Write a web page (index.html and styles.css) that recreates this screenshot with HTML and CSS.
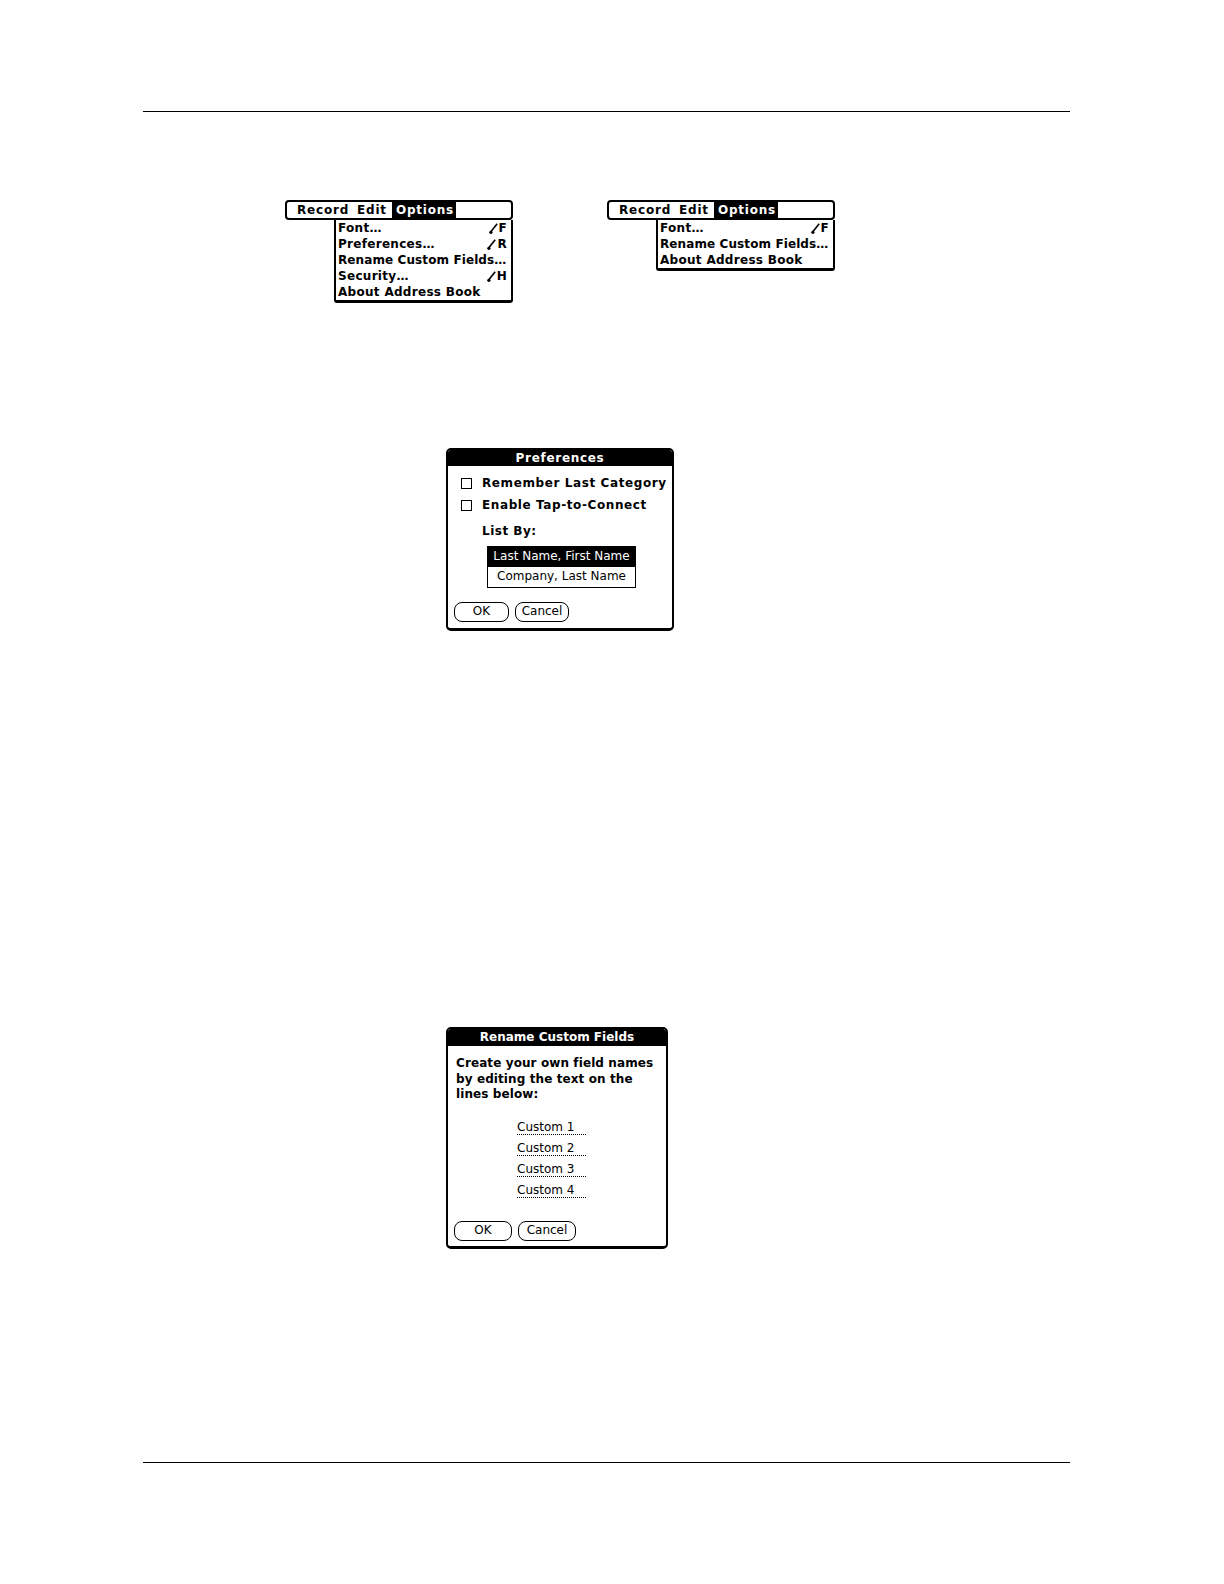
FILE: index.html
```html
<!DOCTYPE html>
<html>
<head>
<meta charset="utf-8">
<link rel="stylesheet" href="styles.css">
</head>
<body>
<div class="page">
  <hr class="rule">
  <div class="menus">
    <div class="menu">
      <div class="menubar"><span class="mt">Record</span><span class="mt">Edit</span><span class="mt active">Options</span></div>
      <div class="dropdown">
        <div class="item"><span>Font…</span><span class="sc"><svg class="stroke" viewBox="0 0 9 11" width="9" height="11"><path d="M1.2 9.6 L8.2 0.8" stroke="#000" stroke-width="1.6" fill="none"/><circle cx="1.9" cy="9.3" r="1.6" fill="#000"/></svg>F</span></div>
        <div class="item"><span>Preferences…</span><span class="sc"><svg class="stroke" viewBox="0 0 9 11" width="9" height="11"><path d="M1.2 9.6 L8.2 0.8" stroke="#000" stroke-width="1.6" fill="none"/><circle cx="1.9" cy="9.3" r="1.6" fill="#000"/></svg>R</span></div>
        <div class="item"><span class="tight">Rename Custom Fields…</span></div>
        <div class="item"><span>Security…</span><span class="sc"><svg class="stroke" viewBox="0 0 9 11" width="9" height="11"><path d="M1.2 9.6 L8.2 0.8" stroke="#000" stroke-width="1.6" fill="none"/><circle cx="1.9" cy="9.3" r="1.6" fill="#000"/></svg>H</span></div>
        <div class="item"><span>About Address Book</span></div>
      </div>
    </div>
    <div class="menu">
      <div class="menubar"><span class="mt">Record</span><span class="mt">Edit</span><span class="mt active">Options</span></div>
      <div class="dropdown">
        <div class="item"><span>Font…</span><span class="sc"><svg class="stroke" viewBox="0 0 9 11" width="9" height="11"><path d="M1.2 9.6 L8.2 0.8" stroke="#000" stroke-width="1.6" fill="none"/><circle cx="1.9" cy="9.3" r="1.6" fill="#000"/></svg>F</span></div>
        <div class="item"><span class="tight">Rename Custom Fields…</span></div>
        <div class="item"><span>About Address Book</span></div>
      </div>
    </div>
  </div>

  <div class="dialog prefs">
    <div class="title">Preferences</div>
    <div class="check-row"><span class="box"></span><span class="label">Remember Last Category</span></div>
    <div class="check-row"><span class="box"></span><span class="label">Enable Tap-to-Connect</span></div>
    <div class="listby">List By:</div>
    <div class="listbox">
      <div class="opt selected">Last Name, First Name</div>
      <div class="opt">Company, Last Name</div>
    </div>
    <div class="buttons">
      <span class="btn ok">OK</span>
      <span class="btn cancel">Cancel</span>
    </div>
  </div>

  <div class="dialog rename">
    <div class="title">Rename Custom Fields</div>
    <p class="desc">Create your own field names<br>by editing the text on the<br>lines below:</p>
    <div class="fields">
      <div class="field"><span>Custom 1</span></div>
      <div class="field"><span>Custom 2</span></div>
      <div class="field"><span>Custom 3</span></div>
      <div class="field"><span>Custom 4</span></div>
    </div>
    <div class="buttons">
      <span class="btn ok2">OK</span>
      <span class="btn cancel2">Cancel</span>
    </div>
  </div>

  <hr class="rule rule-bottom">
</div>
</body>
</html>
```
FILE: styles.css
```css
* { box-sizing: border-box; }
html, body { overflow: hidden; }
body {
  margin: 0;
  background: #fff;
  color: #000;
  font-family: "DejaVu Sans", "Liberation Sans", sans-serif;
}
.page {
  padding-top: 111px;
}
.rule {
  display: block;
  margin: 0 0 0 143px;
  width: 927px;
  height: 0;
  border: 0;
  border-top: 1.5px solid #000;
}
.rule-bottom { margin-top: 213px; }

/* Menus */
.menus {
  display: flex;
  align-items: flex-start;
  gap: 94px;
  margin: 88px 0 0 285px;
}
.menu { width: 228px; }
.menubar {
  height: 20px;
  border: 2px solid #000;
  border-radius: 4px;
  display: flex;
  align-items: center;
  padding-left: 7px;
  font-weight: bold;
  font-size: 12px;
  letter-spacing: 0.8px;
}
.mt {
  padding: 0 3px;
  line-height: 16px;
  margin-right: 2px;
}
.mt.active { background: #000; color: #fff; padding: 0 2px 0 4px; }
.dropdown {
  margin-left: 49px;
  border: 2px solid #000;
  border-top: 0;
  border-bottom-width: 3px;
  border-radius: 0 0 3px 3px;
  font-weight: bold;
  font-size: 12px;
  letter-spacing: 0.3px;
}
.item {
  display: flex;
  justify-content: space-between;
  align-items: center;
  height: 16px;
  line-height: 16px;
  padding: 0 4px 0 2px;
  white-space: nowrap;
}
.tight { letter-spacing: 0.1px; }
.sc { display: flex; align-items: center; gap: 1px; }
.stroke { display: block; }

/* Dialogs */
.dialog {
  border: 2px solid #000;
  border-bottom-width: 3px;
  border-radius: 5px;
  overflow: hidden;
  font-size: 12px;
}
.title {
  background: #000;
  color: #fff;
  text-align: center;
  font-weight: bold;
  height: 16px;
  line-height: 16px;
}
.prefs {
  width: 228px;
  margin: 145px 0 0 446px;
  padding-bottom: 6px;
}
.prefs .title { margin-bottom: 6px; letter-spacing: 0.7px; }
.check-row {
  display: flex;
  align-items: center;
  height: 22px;
  padding-left: 13px;
  font-weight: bold;
  white-space: nowrap;
  letter-spacing: 0.6px;
}
.box {
  width: 11px;
  height: 11px;
  border: 1.5px solid #000;
  margin-right: 10px;
}
.listby {
  margin: 7px 0 0 34px;
  height: 16px;
  line-height: 16px;
  font-weight: bold;
  letter-spacing: 0.5px;
}
.listbox {
  margin: 7px 0 0 39px;
  width: 149px;
  border: 1px solid #000;
}
.opt {
  height: 20px;
  line-height: 19px;
  text-align: center;
  white-space: nowrap;
}
.opt.selected { background: #000; color: #fff; }
.buttons {
  display: flex;
  gap: 6px;
  margin: 14px 0 0 6px;
}
.btn {
  height: 20px;
  border: 1.5px solid #000;
  border-radius: 8px;
  text-align: center;
  line-height: 17px;
}
.ok { width: 55px; }
.cancel { width: 54px; }

.rename {
  width: 222px;
  margin: 396px 0 0 446px;
  padding-bottom: 5px;
}
.rename .title { height: 17px; line-height: 17px; }
.desc {
  margin: 10px 0 0 8px;
  font-weight: bold;
  line-height: 15.5px;
  white-space: nowrap;
  letter-spacing: 0.1px;
}
.fields {
  margin: 15px 0 0 69px;
}
.field { height: 21px; padding-top: 3px; }
.field span {
  display: block;
  width: 69px;
  line-height: 13px;
  border-bottom: 1px dotted #000;
}
.rename .buttons { margin-top: 19px; }
.ok2, .cancel2 { width: 58px; }
```
